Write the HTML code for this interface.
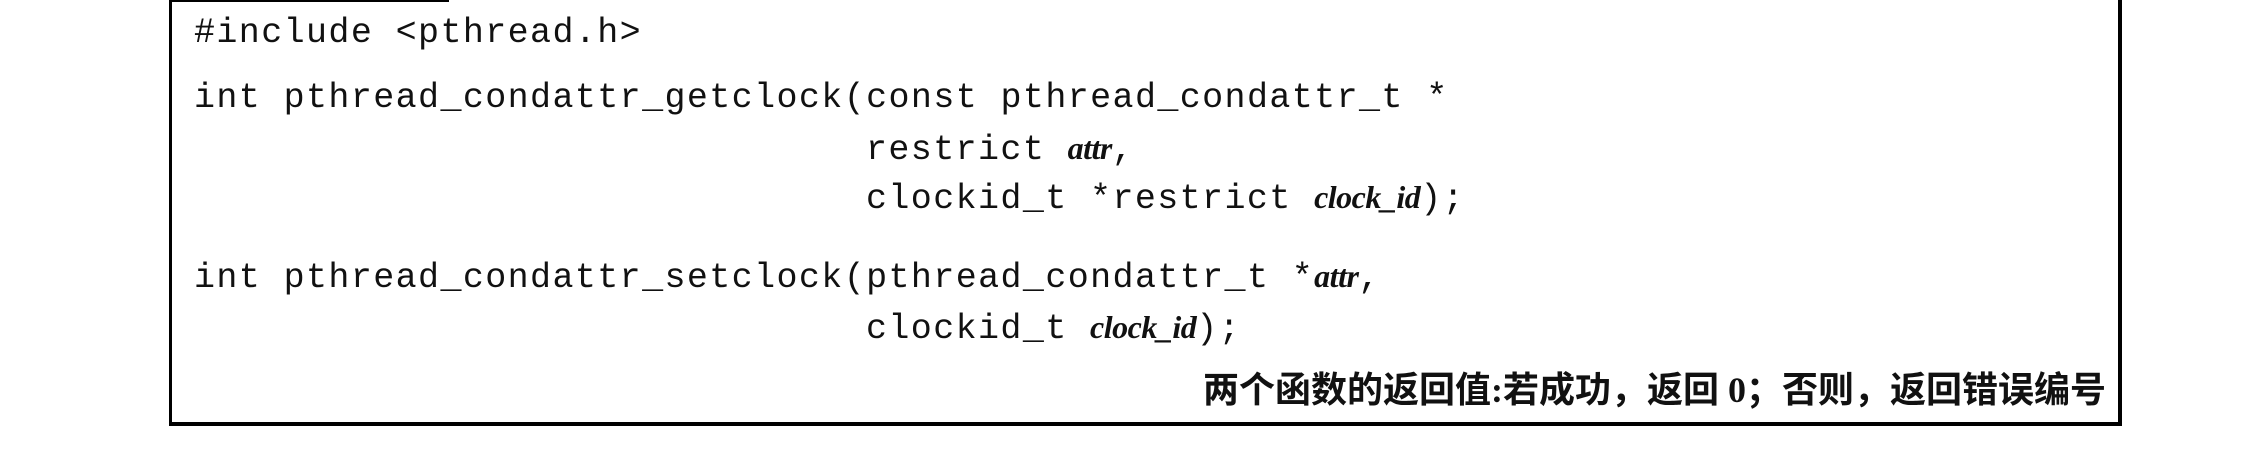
<!DOCTYPE html>
<html><head><meta charset="utf-8"><style>
html,body{margin:0;padding:0;background:#fff;}
body{width:2258px;height:462px;position:relative;overflow:hidden;}
.l{position:absolute;background:#000;}
.t{position:absolute;white-space:pre;font-family:"Liberation Mono",monospace;font-size:35px;letter-spacing:1.4px;color:#111;line-height:40px;}
.i{font-family:"Liberation Serif",serif;font-style:italic;font-weight:bold;letter-spacing:-0.5px;font-size:32px;}
.c{position:absolute;right:152px;top:368px;font-family:"Liberation Serif","Noto Sans CJK SC",sans-serif;font-weight:bold;font-size:36px;line-height:44px;color:#111;white-space:pre;}
</style></head><body>
<div class="l" style="left:169px;top:0;width:3px;height:426px"></div>
<div class="l" style="left:169px;top:0;width:280px;height:2px"></div>
<div class="l" style="left:2118px;top:0;width:4px;height:426px"></div>
<div class="l" style="left:169px;top:422px;width:1953px;height:4px"></div>
<div class="t" style="left:194px;top:13px">#include &lt;pthread.h&gt;</div>
<div class="t" style="left:194px;top:78px">int pthread_condattr_getclock(const pthread_condattr_t *</div>
<div class="t" style="left:866px;top:128px">restrict <span class="i">attr</span>,</div>
<div class="t" style="left:866px;top:177px">clockid_t *restrict <span class="i">clock_id</span>);</div>
<div class="t" style="left:194px;top:256px">int pthread_condattr_setclock(pthread_condattr_t *<span class="i">attr</span>,</div>
<div class="t" style="left:866px;top:307px">clockid_t <span class="i">clock_id</span>);</div>
<div class="c">两个函数的返回值:若成功，返回 0；否则，返回错误编号</div>
</body></html>
